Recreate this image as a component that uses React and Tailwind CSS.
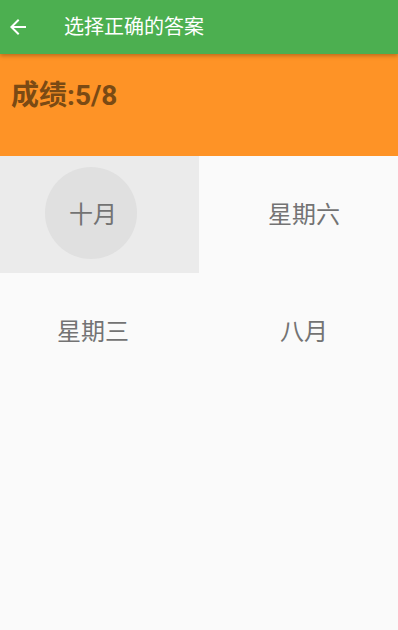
export default function App() {
  const options = ["十月", "星期六", "星期三", "八月"];

  return (
    <div
      className="w-[398px] h-[630px] bg-[#fafafa] flex flex-col overflow-hidden"
      style={{ fontFamily: '"Roboto", "Noto Sans CJK SC", sans-serif' }}
    >
      {/* toolbar */}
      <div className="relative z-10 h-[54px] bg-[#4caf50] flex items-center shadow-[0_2px_4px_rgba(0,0,0,0.25)]">
        <svg className="ml-[6px] w-[24px] h-[24px]" viewBox="0 0 24 24" fill="white">
          <path d="M20 11H7.83l5.59-5.59L12 4l-8 8 8 8 1.41-1.41L7.83 13H20v-2z" />
        </svg>
        <span className="ml-[34px] text-white text-[20px]">选择正确的答案</span>
      </div>

      {/* score */}
      <div className="h-[102px] bg-[#fe9326] pl-[11px] pt-[21px]">
        <span className="text-[28px] font-bold text-[#7a4a14]">成绩:5/8</span>
      </div>

      {/* answers */}
      <div className="grid grid-cols-2">
        {options.map((opt, i) => (
          <div
            key={opt}
            className={`relative h-[117px] flex items-center justify-center ${i % 2 === 0 ? "pr-[13px]" : "pl-[11px]"} ${i === 0 ? "bg-[#ebebeb]" : ""}`}
          >
            {i === 0 && (
              <div className="absolute left-[45px] top-[11px] w-[92px] h-[92px] rounded-full bg-[#e0e0e0]" />
            )}
            <span className="relative text-[24px] text-[#737373]">{opt}</span>
          </div>
        ))}
      </div>
    </div>
  );
}
